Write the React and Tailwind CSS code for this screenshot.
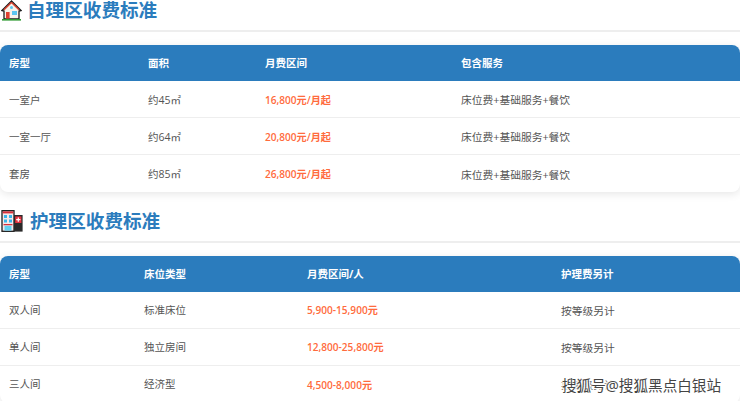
const font = { fontFamily: '"Open Sans", "Noto Sans CJK SC", sans-serif' };

const careRows = [
  ["一室户", "约45㎡", "16,800元/月起", "床位费+基础服务+餐饮"],
  ["一室一厅", "约64㎡", "20,800元/月起", "床位费+基础服务+餐饮"],
  ["套房", "约85㎡", "26,800元/月起", "床位费+基础服务+餐饮"],
];

const nursingRows = [
  ["双人间", "标准床位", "5,900-15,900元", "按等级另计"],
  ["单人间", "独立房间", "12,800-25,800元", "按等级另计"],
  ["三人间", "经济型", "4,500-8,000元", "按等级另计"],
];

function HouseIcon() {
  return (
    <svg width="21" height="21" viewBox="0 0 21 21" className="shrink-0">
      <path d="M10.5 1 L1 10.5 L3 11 L3 19 L18 19 L18 11 L20 10.5 Z" fill="#f7f3ea" stroke="#1c1c1c" strokeWidth="1.3" />
      <path d="M10.5 2.4 L3 9.8 M10.5 2.4 L18 9.8" stroke="#d8402f" strokeWidth="1.4" fill="none" />
      <rect x="5" y="12" width="3.6" height="6.5" fill="#e0402f" />
      <rect x="11" y="11" width="5" height="4" fill="#5cc6f0" />
      <circle cx="10.5" cy="7.5" r="1.5" fill="#5cc6f0" />
      <rect x="1" y="19" width="19" height="1.6" fill="#2f9a32" />
    </svg>
  );
}

function HospitalIcon() {
  return (
    <svg width="22" height="22" viewBox="0 0 22 22" className="shrink-0">
      <rect x="1" y="0.7" width="12" height="20.6" fill="#f6e9ea" stroke="#1c1c1c" strokeWidth="1.3" />
      <rect x="1.7" y="1.4" width="10.6" height="2" fill="#d92f3a" />
      <rect x="3" y="5" width="3" height="3" fill="#39b6ec" />
      <rect x="8" y="5" width="3" height="3" fill="#39b6ec" />
      <rect x="3" y="9.5" width="3" height="3" fill="#39b6ec" />
      <rect x="8" y="9.5" width="3" height="3" fill="#39b6ec" />
      <rect x="2.5" y="14" width="9" height="1.3" fill="#d92f3a" />
      <rect x="3.5" y="15.8" width="7" height="4.8" fill="#63d0f0" />
      <rect x="13" y="5" width="8.6" height="16.6" fill="#2a2a2a" />
      <rect x="14.2" y="6.4" width="6.2" height="6.6" fill="#e5323f" />
      <path d="M17.3 7.6 V11.8 M15.2 9.7 H19.4" stroke="#fff" strokeWidth="1.2" />
    </svg>
  );
}

function PriceTable({ head, rows, widths, cellTop }) {
  return (
    <div className="rounded-lg overflow-hidden shadow-[0_2px_8px_rgba(0,0,0,0.1)] bg-white">
      <table className="w-full table-fixed border-collapse text-[10.5px]">
        <colgroup>
          {widths.map((w, i) => (
            <col key={i} style={{ width: w }} />
          ))}
        </colgroup>
        <thead>
          <tr className="h-[36px] bg-[#2b7cbd] text-white">
            {head.map((h) => (
              <th key={h} className="pl-[9px] pt-[1px] text-left font-bold">{h}</th>
            ))}
          </tr>
        </thead>
        <tbody>
          {rows.map((r, i) => (
            <tr key={i} className="h-[36.6px] last:h-[38px] border-b border-[#eeeeee] last:border-b-0 text-[#555555]">
              <td className={`pl-[9px] ${cellTop}`}>{r[0]}</td>
              <td className={`pl-[9px] ${cellTop}`}>{r[1]}</td>
              <td className={`pl-[9px] ${cellTop} text-[10.1px] font-semibold text-[#ff6b3d]`}>{r[2]}</td>
              <td className={`pl-[9px] ${cellTop} text-[10.75px]`}>{r[3]}</td>
            </tr>
          ))}
        </tbody>
      </table>
    </div>
  );
}

export default function App() {
  return (
    <div className="relative h-[401px] w-[740px] overflow-hidden bg-white" style={font}>
      <div className="flex h-[32px] items-start gap-[5px] border-b-2 border-[#eeeeee] pl-[1px]">
        <HouseIcon />
        <h2 className="text-[18.6px] font-bold leading-[20px] text-[#2b7cbd]">自理区收费标准</h2>
      </div>
      <div className="mt-[13px]">
        <PriceTable
          head={["房型", "面积", "月费区间", "包含服务"]}
          rows={careRows}
          widths={["139px", "117px", "196px", "288px"]}
          cellTop="pt-[3px]"
        />
      </div>
      <div className="mt-[18px] flex h-[33px] items-start gap-[7px] border-b-2 border-[#eeeeee] pl-[1px]">
        <HospitalIcon />
        <h2 className="text-[18.6px] font-bold leading-[22px] text-[#2b7cbd]">护理区收费标准</h2>
      </div>
      <div className="mt-[13px]">
        <PriceTable
          head={["房型", "床位类型", "月费区间/人", "护理费另计"]}
          rows={nursingRows}
          widths={["135px", "163px", "254px", "188px"]}
          cellTop="pt-[1px]"
        />
      </div>
      <div className="absolute left-[562px] top-[376px] text-[14.6px] leading-[18px] text-[#444444] [text-shadow:1px_1px_1px_#fff,-1px_-1px_1px_#fff,1px_-1px_1px_#fff,-1px_1px_1px_#fff]">
        搜狐号@搜狐黑点白银站
      </div>
    </div>
  );
}
